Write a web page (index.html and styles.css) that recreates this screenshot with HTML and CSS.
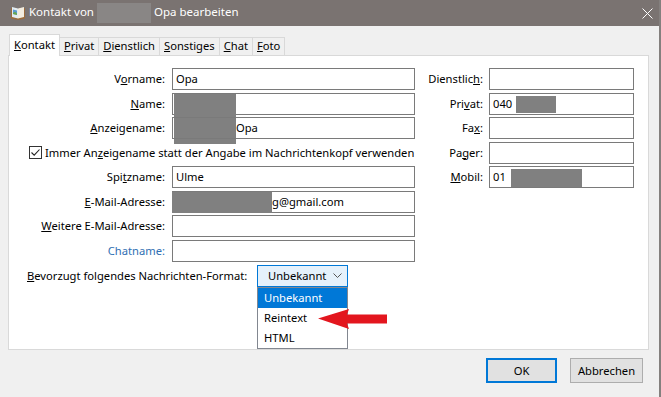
FILE: index.html
```html
<!DOCTYPE html>
<html lang="de">
<head>
    <meta charset="UTF-8">
    <title>Kontakt bearbeiten</title>
    <link rel="stylesheet" href="styles.css">
</head>
<body>
<div class="window">
    <div class="titlebar">
        <svg class="app-icon" width="16" height="16" viewBox="0 0 16 16">
            <path d="M1 3 L8 4.5 L15 3 L15 13.5 L8 15 L1 13.5 Z" fill="#9c6c3c"/>
            <path d="M2 2 L8 3.5 L8 13.5 L2 12 Z" fill="#e3ecf1"/>
            <path d="M14 2 L8 3.5 L8 13.5 L14 12 Z" fill="#f3ede0"/>
            <path d="M3 4.5 L7 5.5 L7 10 L3 9 Z" fill="#5b9bd2"/>
            <path d="M3 8 L5 6.8 L7 8.6 L7 10 L3 9 Z" fill="#6ba84f"/>
        </svg>
        <span class="title">Kontakt von <span class="title-redact"></span> Opa bearbeiten</span>
        <svg class="close" width="11" height="11" viewBox="0 0 11 11">
            <path d="M0.5 0.5 L10.5 10.5 M10.5 0.5 L0.5 10.5" stroke="#fff" stroke-width="1"/>
        </svg>
    </div>

    <div class="dialog">
        <div class="tabs">
            <div class="tab active"><u>K</u>ontakt</div>
            <div class="tab"><u>P</u>rivat</div>
            <div class="tab"><u>D</u>ienstlich</div>
            <div class="tab"><u>S</u>onstiges</div>
            <div class="tab"><u>C</u>hat</div>
            <div class="tab"><u>F</u>oto</div>
        </div>

        <div class="panel">
            <div class="form">
                <label class="lbl">V<u>o</u>rname:</label>
                <div class="field">Opa</div>
                <label class="lbl lbl-r">Dienstlic<u>h</u>:</label>
                <div class="field"></div>

                <label class="lbl"><u>N</u>ame:</label>
                <div class="field"><span class="redact-tall"></span></div>
                <label class="lbl lbl-r">Pri<u>v</u>at:</label>
                <div class="field">040 <span class="redact redact-phone"></span></div>

                <label class="lbl"><u>A</u>nzeigename:</label>
                <div class="field field-indent">Opa</div>
                <label class="lbl lbl-r">Fa<u>x</u>:</label>
                <div class="field"></div>

                <div class="check-row">
                    <span class="checkbox">
                        <svg width="11" height="11" viewBox="0 0 11 11">
                            <path d="M1.5 5.5 L4.2 8.2 L9.5 2.5" fill="none" stroke="#222" stroke-width="1.1"/>
                        </svg>
                    </span>
                    <span>Immer An<u>z</u>eigename statt der Angabe im Nachrichtenkopf verwenden</span>
                </div>
                <label class="lbl lbl-r">Pa<u>g</u>er:</label>
                <div class="field"></div>

                <label class="lbl">Spi<u>t</u>zname:</label>
                <div class="field">Ulme</div>
                <label class="lbl lbl-r"><u>M</u>obil:</label>
                <div class="field">01 <span class="redact redact-mobile"></span></div>

                <label class="lbl"><u>E</u>-Mail-Adresse:</label>
                <div class="field"><span class="redact redact-mail"></span>g@gmail.com</div>
                <span></span><span></span>

                <label class="lbl"><u>W</u>eitere E-Mail-Adresse:</label>
                <div class="field"></div>
                <span></span><span></span>

                <label class="lbl chat-label">Chatname:</label>
                <div class="field"></div>
            </div>

            <div class="format-row">
                <label class="format-label"><u>B</u>evorzugt folgendes Nachrichten-Format:</label>
                <div class="select-wrap">
                    <div class="select">
                        <span>Unbekannt</span>
                        <svg class="chevron" width="9" height="5" viewBox="0 0 9 5">
                            <path d="M0.5 0.5 L4.5 4.5 L8.5 0.5" fill="none" stroke="#555" stroke-width="1"/>
                        </svg>
                    </div>
                    <div class="dropdown">
                        <div class="option selected">Unbekannt</div>
                        <div class="option">Reintext</div>
                        <div class="option">HTML</div>
                    </div>
                    <svg class="arrow" width="70" height="22" viewBox="0 0 70 22">
                        <path d="M0 10.5 L31 1 L29 6.5 L69 6.5 L69 15.5 L29 15.5 L31 21 Z" fill="#e3161e"/>
                    </svg>
                </div>
            </div>
        </div>

        <div class="buttons">
            <button class="btn btn-ok">OK</button>
            <button class="btn btn-cancel">Abbrechen</button>
        </div>
    </div>
</div>
</body>
</html>
```

FILE: styles.css
```css
body {
    margin: 0;
    font-family: "Noto Sans", "Open Sans", sans-serif;
    font-size: 11.2px;
    color: #000;
}
.window {
    width: 661px;
    height: 397px;
    box-sizing: border-box;
    background: #f0f0f0;
    border-right: 2px solid #84807e;
    overflow: hidden;
}
.titlebar {
    height: 26px;
    background: #7a7371;
    color: #fff;
    display: flex;
    align-items: center;
    padding-left: 10px;
    font-size: 11.5px;
}
.app-icon {
    margin-right: 3px;
}
.title {
    flex: 1;
    white-space: nowrap;
}
.title-redact {
    display: inline-block;
    width: 54px;
    height: 20px;
    background: #898685;
    vertical-align: middle;
}
.close {
    margin-right: 6px;
}
.dialog {
    padding: 8px 10px 0 8px;
}
.tabs {
    display: flex;
    align-items: flex-end;
    height: 22px;
    padding-left: 1px;
    margin-bottom: -1px;
    position: relative;
    z-index: 1;
}
.tab {
    height: 18px;
    box-sizing: border-box;
    margin-bottom: 1px;
    padding: 0 4px;
    border: 1px solid #d9d9d9;
    border-left: none;
    border-bottom: none;
    background: #f0f0f0;
    line-height: 16px;
}
.tab.active {
    height: 22px;
    margin-bottom: 0;
    padding: 0 4px;
    border-left: 1px solid #d9d9d9;
    background: #fff;
    line-height: 19px;
}
.panel {
    height: 295px;
    box-sizing: border-box;
    background: #fff;
    border: 1px solid #d9d9d9;
    padding-top: 12px;
}
.form {
    display: grid;
    grid-template-columns: 163px 243px 74px 145px;
    grid-auto-rows: 22px;
    row-gap: 2.5px;
}
.lbl {
    text-align: right;
    padding-right: 7px;
    line-height: 22px;
    white-space: nowrap;
}
.lbl-r {
    padding-right: 6px;
}
.chat-label {
    color: #2f6fb3;
}
.field {
    position: relative;
    box-sizing: border-box;
    border: 1px solid #7a7a7a;
    padding: 0 3px;
    line-height: 20px;
    white-space: nowrap;
}
.field-indent {
    padding-left: 63px;
}
.redact {
    display: inline-block;
    background: #808080;
    vertical-align: middle;
}
.redact-phone {
    width: 40px;
    height: 17px;
    margin-left: 1px;
}
.redact-mobile {
    width: 71px;
    height: 18px;
    margin-left: 2px;
}
.redact-mail {
    width: 100px;
    height: 21px;
    margin-left: -4px;
    vertical-align: top;
}
.redact-tall {
    position: absolute;
    left: 1px;
    top: 0;
    width: 62px;
    height: 50px;
    background: #808080;
}
.check-row {
    grid-column: 1 / 3;
    display: flex;
    align-items: center;
    gap: 3px;
    padding-left: 20px;
    white-space: nowrap;
}
.checkbox {
    width: 13px;
    height: 13px;
    box-sizing: border-box;
    border: 1px solid #333;
    background: #fff;
    display: flex;
    align-items: center;
    justify-content: center;
}
.format-row {
    display: flex;
    align-items: center;
    height: 22px;
    margin-top: 3px;
    padding-left: 18px;
}
.format-label {
    width: 230px;
    white-space: nowrap;
}
.select-wrap {
    position: relative;
    width: 91px;
    height: 22px;
}
.select {
    height: 22px;
    box-sizing: border-box;
    border: 1px solid #0078d7;
    background: #e5f1fb;
    display: flex;
    align-items: center;
    justify-content: space-between;
    padding: 0 5px 0 10px;
}
.dropdown {
    position: absolute;
    top: 22px;
    left: 0;
    width: 91px;
    box-sizing: border-box;
    border: 1px solid #828790;
    background: #fff;
    z-index: 2;
}
.option {
    height: 20px;
    line-height: 20px;
    padding-left: 6px;
}
.option.selected {
    background: #0078d7;
    color: #fff;
}
.arrow {
    position: absolute;
    left: 61px;
    top: 43px;
    z-index: 3;
}
.buttons {
    display: flex;
    justify-content: flex-end;
    gap: 13px;
    margin-top: 8px;
    padding-right: 6px;
}
.btn {
    height: 25px;
    box-sizing: border-box;
    padding: 0;
    font: inherit;
    color: #000;
    background: #e1e1e1;
    border: 1px solid #adadad;
}
.btn-ok {
    width: 71px;
    border: 2px solid #0078d7;
}
.btn-cancel {
    width: 73px;
}
```
